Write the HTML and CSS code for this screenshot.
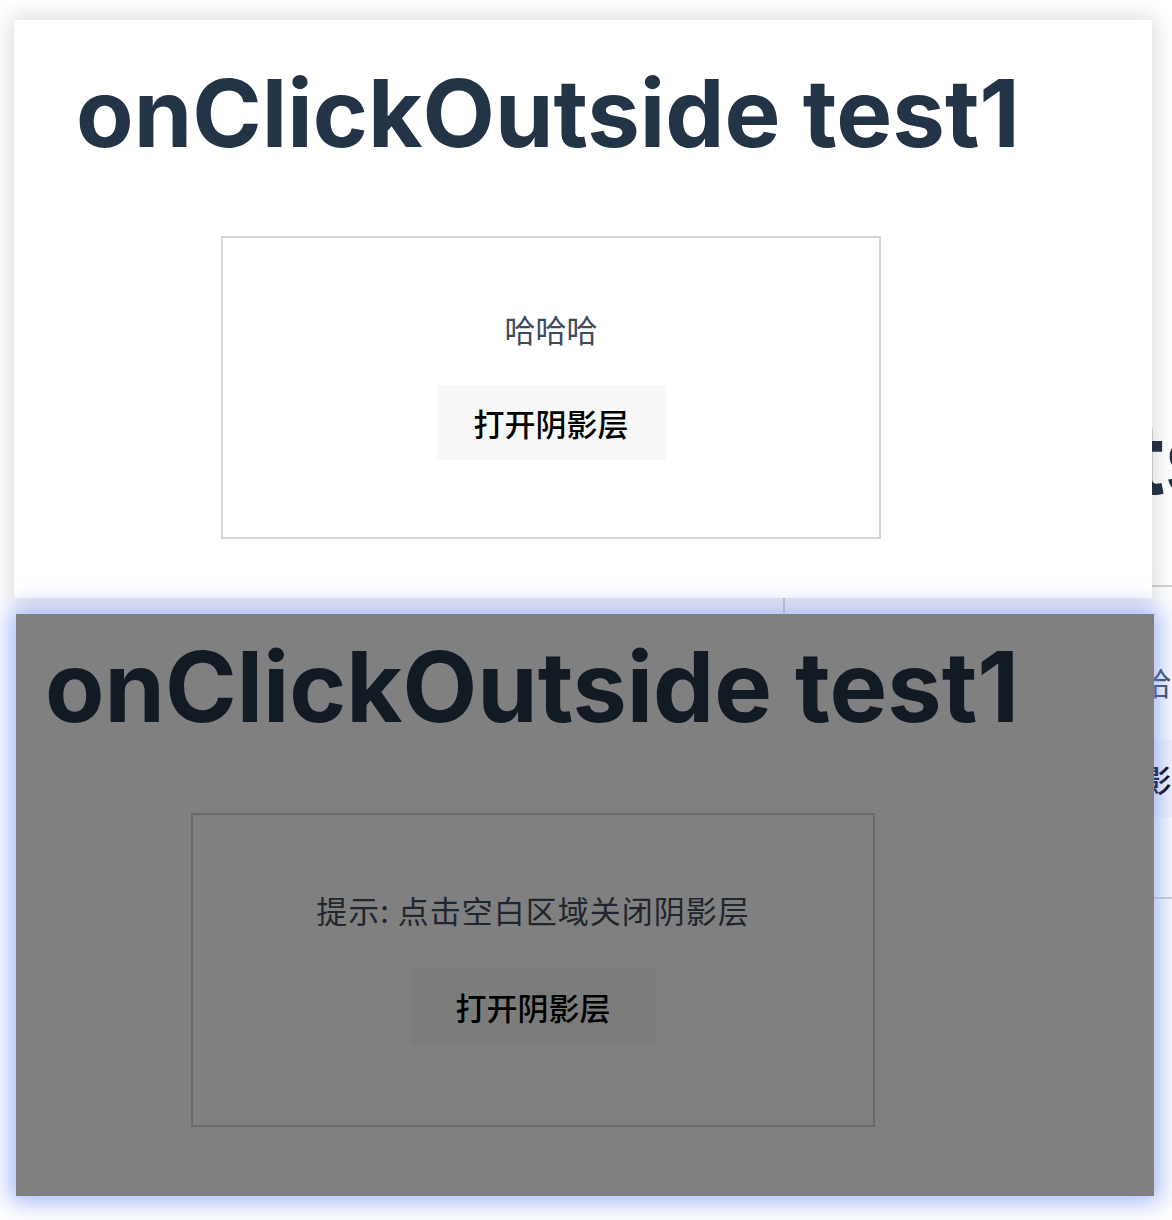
FILE: index.html
```html
<!DOCTYPE html>
<html lang="zh">
<head>
<meta charset="utf-8">
<title>onClickOutside test1</title>
<link rel="stylesheet" href="styles.css">
</head>
<body>
<div class="desk">
  <section class="win win-back demo demo-lg">
    <h1 class="demo-title">onClickOutside test1</h1>
    <div class="demo-box">
      <p class="demo-text">哈哈哈</p>
      <button class="demo-btn">打开阴影层</button>
    </div>
  </section>

  <section class="win win-front demo demo-sm">
    <h1 class="demo-title">onClickOutside test1</h1>
    <div class="demo-box">
      <p class="demo-text">哈哈哈</p>
      <button class="demo-btn">打开阴影层</button>
    </div>
  </section>

  <section class="win win-mask demo demo-lg demo-dim">
    <h1 class="demo-title">onClickOutside test1</h1>
    <div class="demo-box">
      <p class="demo-text demo-hint">提示: 点击空白区域关闭阴影层</p>
      <button class="demo-btn">打开阴影层</button>
    </div>
  </section>
</div>
</body>
</html>
```

FILE: styles.css
```css
html, body {
  margin: 0;
  padding: 0;
  background: #ffffff;
}

.desk {
  position: relative;
  width: 1172px;
  height: 1220px;
  overflow: hidden;
  background: #ffffff;
}

.win {
  position: absolute;
  box-sizing: border-box;
  width: 1138px;
}

.win-back {
  left: 608px;
  top: 386px;
  height: 582px;
  background: #ffffff;
}

.win-front {
  left: 14px;
  top: 20px;
  height: 578px;
  background: #ffffff;
  box-shadow: 0 0 22px 2px rgba(0, 0, 0, 0.16);
}

.win-mask {
  left: 16px;
  top: 614px;
  height: 582px;
  background: #808080;
  box-shadow: 0 0 22px 6px rgba(105, 135, 245, 0.6);
}

.demo {
  display: flex;
  flex-direction: column;
  align-items: flex-start;
}

.demo-title {
  margin: 0;
  font-family: Inter, "Liberation Sans", sans-serif;
  font-weight: 700;
  line-height: 1.2;
  color: #243447;
  white-space: nowrap;
}

.demo-box {
  box-sizing: border-box;
  display: flex;
  flex-direction: column;
  align-items: center;
  border: 2px solid #d4d4d4;
}

.demo-text {
  margin: 0;
  font-family: "Noto Sans CJK SC", "Noto Sans", sans-serif;
  color: #3d4b5c;
  white-space: nowrap;
}

.demo-btn {
  border: none;
  background: #f8f8f8;
  color: #000000;
  font-family: "Noto Sans CJK SC", "Noto Sans", sans-serif;
  font-weight: 500;
  white-space: nowrap;
}

/* size used by the front card */
.demo-sm {
  padding: 37px 0 0 62px;
}
.demo-sm .demo-title {
  font-size: 94px;
}
.demo-sm .demo-box {
  margin: 66px 0 0 145px;
  width: 660px;
  height: 303px;
  padding-top: 73px;
}
.demo-sm .demo-text {
  font-size: 31px;
  line-height: 36px;
  margin-bottom: 38px;
}
.demo-sm .demo-btn {
  font-size: 31px;
  line-height: 37px;
  padding: 19px 37px;
}

/* size used by the back card and the mask */
.demo-lg {
  padding: 15px 0 0 29px;
}
.demo-lg .demo-title {
  font-size: 97px;
}
.demo-lg .demo-box {
  margin: 68px 0 0 146px;
  width: 684px;
  height: 314px;
  padding-top: 77px;
}
.demo-lg .demo-text {
  font-size: 31px;
  line-height: 36px;
  margin-bottom: 40px;
}
.demo-lg .demo-hint {
  letter-spacing: 1px;
}
.demo-lg .demo-btn {
  font-size: 31px;
  line-height: 37px;
  padding: 20px 45px;
}

/* dimmed colours under the mask */
.demo-dim .demo-title {
  color: #121a24;
}
.demo-dim .demo-box {
  border-color: #6a6a6a;
}
.demo-dim .demo-text {
  color: #1f262e;
}
.demo-dim .demo-btn {
  background: #7c7c7c;
  color: #000000;
}
```
